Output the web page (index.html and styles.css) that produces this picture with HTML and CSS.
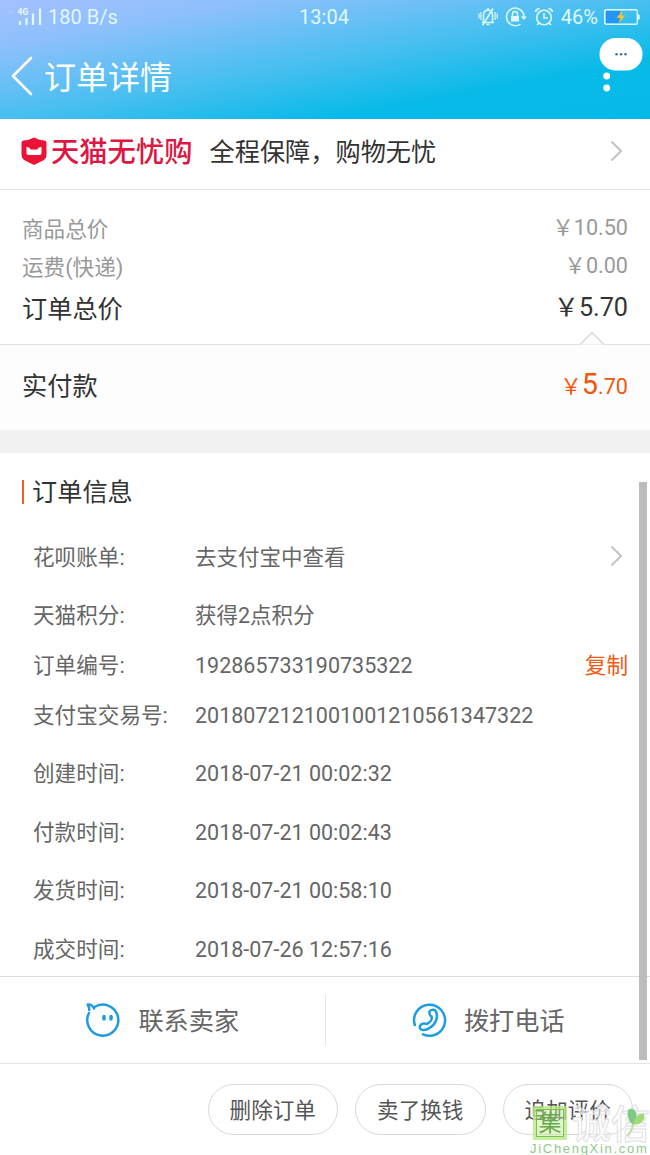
FILE: index.html
```
<!DOCTYPE html>
<html lang="zh-CN">
  <head>
    <meta charset="UTF-8" />
    <meta name="viewport" content="width=device-width, initial-scale=1.0" />
    <title>订单详情</title>
    <link rel="stylesheet" href="styles.css">
  </head>
  <body>
    <header class="header">
      <div class="status-bar">
        <div class="status-left">
          <svg class="signal" width="36" height="20" viewBox="0 0 36 20">
            <path d="M1.500 3v4M4 3v4" stroke="#c4d6ff" stroke-width="1.500" opacity=".5" />
            <text x="9.500" y="8" font-size="8.500" font-weight="700" fill="#e8fbff">4G</text>
            <path d="M12 14v4M18.500 11v7M25 6.500v11.500M32 1.500v16.500" stroke="#e0f8ff" stroke-width="2.200" />
          </svg>
          <span>180 B/s</span>
        </div>
        <span class="clock">13:04</span>
        <div class="status-right">
          <svg width="20" height="20" viewBox="0 0 20 20" fill="none" stroke="#dcfaff" stroke-width="1.500">
            <path d="M4 15.500h12M5.500 15V8q0-4.500 4.500-5 4.500.5 4.500 5v7M8.500 17.500h3M15 1.500L4.500 18.500M10 1v2" />
            <path d="M3 5v8M1 6.500v5M17 5v8M19.200 6.500v5" stroke-width="1.200" />
          </svg>
          <svg width="22" height="20" viewBox="0 0 22 20" fill="none" stroke="#dcfaff" stroke-width="1.500">
            <path d="M17.600 5A8.800 8.800 0 1 0 15.500 17M17.400 4.500Q19 7 19 10" />
            <path d="M15.800 9.500h6L18.800 13z" fill="#dcfaff" stroke="none" />
            <path d="M6 9h8v5.500H6z" fill="#dcfaff" stroke="none" />
            <path d="M7.500 9V7a2.500 2.500 0 0 1 5 0v2" />
          </svg>
          <svg width="20" height="20" viewBox="0 0 20 20" fill="none" stroke="#dcfaff" stroke-width="1.600">
            <circle cx="10" cy="10.500" r="7.300" />
            <path d="M10 6v5h4M1.500 5q.5-3 4-3.500M18.500 5q-.5-3-4-3.500M5 16l-2 2M15 16l2 2" />
          </svg>
          <span class="battery-text">46%</span>
          <svg width="36" height="18" viewBox="0 0 36 18">
            <rect x=".7" y="1.700" width="32.600" height="14.600" rx="1.500" fill="none" stroke="#dcfaff" stroke-width="1.400" />
            <path d="M2 3h14v12H2z" fill="#2493fa" />
            <path d="M34 6.500h1.700v5H34z" fill="#dcfaff" />
            <path d="M18.500 2.500L12.500 10h3.800L14.500 15.500l6.800-8h-3.800z" fill="#efc52d" />
          </svg>
        </div>
      </div>
      <div class="title-bar">
        <svg width="22" height="40" viewBox="0 0 22 40" fill="none" stroke="#fff" stroke-width="2.600" stroke-linecap="round" stroke-linejoin="round">
          <path d="M20 2L2 20l18 18" />
        </svg>
        <h1>订单详情</h1>
      </div>
      <svg class="more" width="44" height="56" viewBox="0 0 44 56">
        <rect x=".5" y="0" width="43" height="32.500" rx="16" fill="#fff" />
        <g fill="#316f91">
          <circle cx="17.500" cy="16.300" r="1.200" />
          <circle cx="22" cy="16.300" r="1.200" />
          <circle cx="26.500" cy="16.300" r="1.200" />
        </g>
        <circle cx="7.700" cy="38" r="3.400" fill="#fff" />
        <circle cx="7.700" cy="50" r="3.400" fill="#fff" />
      </svg>
    </header>

    <section class="promo">
      <svg width="26" height="28" viewBox="0 0 26 28">
        <path d="M13 .5Q17.500 3 23.500 3.500q2 .3 2 2.500v11.500q0 4-3.500 6L13 28 4 23.500q-3.500-2-3.500-6V6q0-2.200 2-2.500Q8.500 3 13 .5z" fill="#ea1237" />
        <path d="M5.500 10q3.500.3 4 2.500h7q.5-2.200 4-2.500v6q0 2-2 2h-11q-2 0-2-2z" fill="#fff" />
      </svg>
      <strong class="promo-brand">天猫无忧购</strong>
      <span class="promo-text">全程保障，购物无忧</span>
      <svg class="arrow" width="13" height="22" viewBox="0 0 13 22"><path d="M1.500 1.500L11 11l-9.500 9.500" /></svg>
    </section>

    <section class="totals">
      <div class="row muted"><span class="label">商品总价</span><span>￥10.50</span></div>
      <div class="row muted"><span class="label">运费(快递)</span><span>￥0.00</span></div>
      <div class="row total"><span class="label">订单总价</span><span>￥5.70</span></div>
    </section>

    <section class="paid">
      <svg class="notch" width="26" height="14" viewBox="0 0 26 14"><path d="M1 13.500L13 1.500l12 12" fill="#fdfdfd" stroke="#d8d8d8" stroke-width="1.300" /></svg>
      <span class="label">实付款</span>
      <span class="paid-price">￥<b>5</b>.70</span>
    </section>

    <section class="info">
      <h2>订单信息</h2>
      <dl>
        <div class="info-row">
          <dt>花呗账单:</dt><dd>去支付宝中查看</dd>
          <svg class="arrow" width="13" height="22" viewBox="0 0 13 22"><path d="M1.500 1.500L11 11l-9.500 9.500" /></svg>
        </div>
        <div class="info-row"><dt>天猫积分:</dt><dd>获得2点积分</dd></div>
        <div class="info-row"><dt>订单编号:</dt><dd>192865733190735322</dd><a class="copy">复制</a></div>
        <div class="info-row"><dt>支付宝交易号:</dt><dd>2018072121001001210561347322</dd></div>
        <div class="info-row"><dt>创建时间:</dt><dd>2018-07-21 00:02:32</dd></div>
        <div class="info-row"><dt>付款时间:</dt><dd>2018-07-21 00:02:43</dd></div>
        <div class="info-row"><dt>发货时间:</dt><dd>2018-07-21 00:58:10</dd></div>
        <div class="info-row"><dt>成交时间:</dt><dd>2018-07-26 12:57:16</dd></div>
      </dl>
    </section>

    <section class="contact">
      <div class="contact-item">
        <svg width="36" height="36" viewBox="0 0 36 36" fill="none" stroke="#1d9ce0" stroke-width="2.500" stroke-linecap="round">
          <path d="M9.500 5A15.500 15.500 0 1 1 4 11" />
          <path d="M4.300 8Q4.500 5.500 2.700 2.500q4.300-.5 6.300 4" stroke-linejoin="round" />
          <path d="M19 14.500v2.500M26 14.500v2.500" stroke-width="3.500" />
        </svg>
        <span>联系卖家</span>
      </div>
      <div class="contact-item">
        <svg width="36" height="36" viewBox="0 0 36 36" fill="none" stroke="#1d9ce0" stroke-width="2.500" stroke-linecap="round" stroke-linejoin="round">
          <path d="M3.800 23A15.500 15.500 0 1 1 12 32.300" />
          <path d="M18.500 11.500C17.500 7.500 23.500 6.500 25 9.500 27.500 15.500 24.500 22.500 18.500 26 14.500 29 9 28.500 8.800 25.500 8.800 22 12.500 20.500 15.500 22 19 20.500 21.500 17.500 20.500 14.500 19.300 14 18.800 13 18.500 11.500z" />
        </svg>
        <span>拨打电话</span>
      </div>
    </section>

    <footer class="actions">
      <button>删除订单</button>
      <button>卖了换钱</button>
      <button>追加评价</button>
    </footer>

    <div class="scrollbar"></div>
    <div class="watermark">
      <div class="mark-logo">
        <span class="mark-box">集</span>
        <span class="mark-name">诚信</span>
      </div>
      <div class="mark-url">JiChengXin.com</div>
      <svg class="leaf" width="20" height="30" viewBox="0 0 20 30">
        <path d="M7 18Q0 12 2 3 6-1 10 5q2 6-3 13z" fill="#7ecb88" />
        <path d="M7 18Q9 6 18 6.500 20 17 7 18z" fill="#a3d977" />
        <path d="M7 17Q6 25 1 29" fill="none" stroke="#b9df9d" stroke-width="2" />
      </svg>
    </div>
  </body>
</html>
```
FILE: styles.css
```
* {
  box-sizing: border-box;
}
body {
  position: relative;
  margin: 0;
  width: 650px;
  height: 1155px;
  overflow: hidden;
  background-color: #fff;
  color: #333;
  font-family: Roboto, "Noto Sans CJK SC", sans-serif;
  font-size: 21.6px;
  line-height: 30px;
}
h1, h2, dl, dt, dd {
  margin: 0;
  font-weight: 400;
}
svg {
  display: block;
  flex: none;
}

/* Header */
.header {
  position: relative;
  height: 119px;
  background: linear-gradient(to bottom right, #a4c0ff 0%, #8dc0fb 20%, #48bff0 50%, #08bae8 75%, #05b9e7 100%);
  color: #fff;
}
.status-bar {
  display: grid;
  grid-template-columns: 1fr auto 1fr;
  height: 34px;
  padding: 0 10px 0 8px;
  align-items: center;
  color: #e0f8ff;
  font-size: 20px;
}
.status-left, .status-right {
  display: flex;
  align-items: center;
}
.status-left {
  gap: 4px;
}
.status-right {
  justify-content: flex-end;
  gap: 7px;
}
.battery-text {
  margin-right: -1px;
}
.title-bar {
  display: flex;
  align-items: center;
  gap: 11px;
  height: 84px;
  padding-left: 11px;
}
.title-bar h1 {
  padding-top: 3px;
  font-size: 32px;
  line-height: 40px;
}
.more {
  position: absolute;
  top: 38px;
  right: 7px;
}

/* Promo strip */
.promo {
  display: flex;
  align-items: center;
  height: 71px;
  padding: 0 27px 7px 21px;
  border-bottom: 1px solid #e3e3e3;
}
.promo-brand {
  margin-left: 4px;
  padding-top: 4px;
  color: #dc1744;
  font-size: 28.3px;
  font-weight: 500;
}
.promo-text {
  margin-left: 17px;
  padding-top: 5px;
  font-size: 25.2px;
}
.arrow {
  margin-left: auto;
  fill: none;
  stroke: #c4c4c4;
  stroke-width: 2.2;
}

/* Prices */
.label {
  padding-top: 4px;
}
.totals {
  height: 154px;
  padding: 19px 22px 0;
}
.row {
  display: flex;
  justify-content: space-between;
  align-items: center;
  height: 38px;
}
.muted {
  color: #999;
}
.total {
  height: 46px;
  font-size: 25.2px;
}
.paid {
  position: relative;
  display: flex;
  justify-content: space-between;
  align-items: center;
  height: 86px;
  padding: 0 22px 5px;
  border-top: 1px solid #e3e3e3;
  background-color: #fdfdfd;
  font-size: 25.2px;
}
.notch {
  position: absolute;
  top: -14px;
  right: 45px;
}
.paid-price {
  color: #f0570f;
  font-size: 21.6px;
}
.paid-price b {
  font-size: 28.8px;
  font-weight: 400;
}

/* Order info */
.info {
  height: 546px;
  padding: 27px 22px 0;
  border-top: 23px solid #f1f1f1;
}
.info h2 {
  height: 24px;
  padding-left: 8px;
  border-left: 2px solid #f0631f;
  font-size: 25.2px;
  line-height: 26px;
}
.info dl {
  padding: 23px 0 0 11px;
  color: #666;
}
.info-row {
  display: flex;
  align-items: center;
  height: 58.4px;
}
.info-row dt {
  width: 162px;
  padding-top: 3px;
}
.info-row dd {
  padding-top: 3px;
  font-size: 21.5px;
}
.info-row .arrow {
  margin-right: 5px;
}
.info-row:nth-child(3) {
  height: 42px;
}
.info-row:nth-child(4) {
  height: 58px;
}
.copy {
  margin-left: auto;
  padding-top: 3px;
  color: #f0570f;
}

/* Contact */
.contact {
  display: flex;
  align-items: center;
  height: 88px;
  border-top: 1px solid #ddd;
  border-bottom: 1px solid #e3e3e3;
  color: #666;
  font-size: 25.2px;
}
.contact-item {
  display: flex;
  flex: 1;
  align-items: center;
  justify-content: center;
  gap: 17px;
  height: 50px;
}
.contact-item span {
  padding-top: 3px;
}
.contact-item + .contact-item {
  border-left: 1px solid #e3e3e3;
}

/* Bottom buttons */
.actions {
  display: flex;
  justify-content: flex-end;
  align-items: center;
  gap: 17px;
  height: 91px;
  padding-right: 17px;
}
button {
  width: 130.5px;
  height: 51px;
  padding: 3px 0 0;
  border: 1px solid #d8d8d8;
  border-radius: 26px;
  background-color: #fff;
  color: #555;
  font: inherit;
}
.scrollbar {
  position: absolute;
  top: 482px;
  right: 3px;
  width: 8px;
  height: 578px;
  background-color: #bcbcbc;
}

/* Site mark over the bottom right corner */
.watermark {
  position: absolute;
  top: 1106px;
  right: 0;
  width: 120px;
}
.mark-logo {
  display: flex;
  align-items: center;
  gap: 5px;
  height: 34px;
  padding-left: 3px;
}
.mark-box {
  width: 34px;
  height: 34px;
  border: 3px solid rgba(185, 232, 130, 0.6);
  background-color: rgba(190, 235, 140, 0.45);
  outline: 1px solid #79bf55;
  outline-offset: -4px;
  color: #6aa852;
  font-size: 23px;
  line-height: 30px;
  text-align: center;
}
.mark-name {
  padding-top: 4px;
  color: rgba(255, 255, 255, 0.6);
  font-size: 39px;
  font-weight: 500;
  line-height: 34px;
  white-space: nowrap;
  -webkit-text-stroke: 1px #e2dee2;
}
.mark-url {
  color: #8fc98a;
  font-family: "Liberation Sans", sans-serif;
  font-size: 13px;
  letter-spacing: 1.7px;
  line-height: 17px;
}
.leaf {
  position: absolute;
  top: 1px;
  right: 4px;
}
```
